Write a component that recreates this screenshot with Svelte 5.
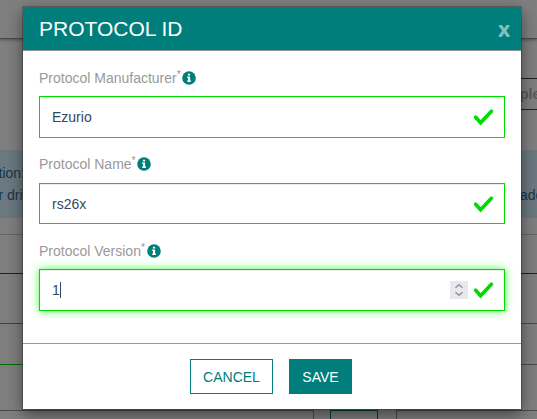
<script>
  const fields = [
    { label: 'Protocol Manufacturer', value: 'Ezurio', kind: 'first' },
    { label: 'Protocol Name', value: 'rs26x', kind: 'second' },
    { label: 'Protocol Version', value: '1', kind: 'focused' },
  ];
</script>

<div class="screen">
  <div class="page">
    <div class="topbar"></div>
    <div class="toolbar"><div class="search">ple</div></div>
    <div class="alert">
      <div class="line"><span>tion:</span></div>
      <div class="line"><span>r driv</span><span class="end">ade</span></div>
    </div>
    <div class="gap"></div>
    <div class="panel"></div>
    <div class="row dark"></div>
    <div class="row valid"><i></i><b></b></div>
    <div class="row valid tall"><i></i><b></b></div>
    <div class="bottom"><i></i><b></b><i class="rest"></i></div>
  </div>

  <div class="modal">
    <header>
      <h4>PROTOCOL ID</h4>
      <span class="close">x</span>
    </header>
    <main>
      {#each fields as f}
        <div class="field {f.kind}">
          <div class="label">
            <span>{f.label}</span><span class="star">*</span>
            <svg class="info" width="14" height="14" viewBox="0 0 14 14">
              <circle cx="7" cy="7" r="6.8" fill="#007e7b" />
              <path d="M5.9 2.8h2.2v1.8H5.9zM5.2 5.6h2.9v3.9h.8v1.4H5.2V9.5h.8V7h-.8z" fill="#fff" />
            </svg>
          </div>
          <div class="input">
            <span>{f.value}</span>
            {#if f.kind === 'focused'}
              <span class="caret"></span>
              <span class="spin">
                <svg width="18" height="18" viewBox="0 0 18 18" fill="none" stroke="#9090a0" stroke-width="1.5">
                  <path d="M5.5 6.7 9 3.7l3.5 3M5.5 11.3l3.5 3 3.5-3" />
                </svg>
              </span>
            {/if}
            <svg class="check" width="20" height="18" viewBox="0 0 20 18" fill="none" stroke="#00dc00" stroke-width="3.6">
              <path d="M1.6 9.2 6.6 14.8 17.4 3.2" stroke-linecap="round" />
            </svg>
          </div>
        </div>
      {/each}
    </main>
    <footer>
      <button>CANCEL</button>
      <button class="save">SAVE</button>
    </footer>
  </div>
</div>

<style>
  .screen {
    position: relative;
    width: 537px;
    height: 419px;
    overflow: hidden;
    font: 14px/20px "Liberation Sans", Arial, sans-serif;
    background: #7f7f7f;
  }
  .screen * { box-sizing: border-box; }
  .page { display: flex; flex-direction: column; height: 419px; }
  .topbar { height: 39px; flex: none; border-bottom: 1px solid #4b4b4b; box-shadow: 0 1px 3px rgba(0, 0, 0, .35); }
  .toolbar { height: 111px; flex: none; padding-top: 39px; display: flex; justify-content: flex-end; }
  .search {
    width: 90px;
    height: 32px;
    border: solid #222;
    border-width: 1px 0;
    padding-left: 73px;
    line-height: 31px;
    font-weight: bold;
    color: #595959;
  }
  .alert { height: 68px; flex: none; padding-top: 13px; background: #6c7980; color: #18364a; }
  .line { height: 21.5px; display: flex; justify-content: space-between; white-space: nowrap; margin-left: -1.5px; }
  .end { width: 17px; }
  .gap { height: 16px; flex: none; }
  .panel { height: 39px; flex: none; border-top: 1px solid #666; }
  .row { height: 50px; flex: none; display: flex; }
  .dark { border-top: 1px solid #222; }
  .valid { height: 41px; }
  .tall { height: 46px; }
  .valid i { flex: 1; border-top: 1px solid #006e00; }
  .valid b { width: 140px; border-top: 1px solid #4b4b4b; }
  .bottom { display: flex; height: 9px; }
  .bottom i { width: 314px; border: solid #4b4b4b; border-width: 1px 1px 0 0; }
  .bottom b { width: 48px; margin: 0 18px 0 16px; border: 1px solid #003f3d; border-bottom: 0; }
  .bottom .rest { flex: 1; border-width: 1px 0 0 1px; }

  .modal {
    position: absolute;
    left: 23px;
    top: 7px;
    width: 498px;
    height: 402px;
    display: flex;
    flex-direction: column;
    background: #fff;
    box-shadow: 0 0 0 1px rgba(0, 0, 0, .2), 0 5px 15px rgba(0, 0, 0, .5);
  }
  header {
    height: 44px;
    flex: none;
    display: flex;
    align-items: center;
    justify-content: space-between;
    padding: 0 11px 0 16px;
    background: #007e7b;
    border-bottom: 1px solid #8b9695;
    color: #fff;
  }
  h4 { margin: 0; font-size: 21px; font-weight: 400; line-height: 24px; }
  .close { font-size: 21px; font-weight: bold; line-height: 24px; color: #80bfbd; text-shadow: 0 1px 0 #80bfbd; }
  main { flex: 1; padding: 17px 16px 0; }
  .field { height: 86px; }
  .second { height: 87px; }
  .label { height: 28px; display: flex; color: #999; }
  .second .label { height: 29px; }
  .star { font-size: 10.5px; line-height: 12px; }
  .info { margin: 3px 0 0 1.5px; }
  .input {
    height: 42px;
    border: 1px solid #00dc00;
    padding: 0 10px 0 12px;
    display: flex;
    align-items: center;
    color: #34495e;
    background: #fff;
    box-shadow: inset 0 1px 1px rgba(0, 0, 0, .075);
  }
  .second .input { height: 41px; }
  .focused .input { box-shadow: inset 0 1px 1px rgba(0, 0, 0, .075), 0 0 8px #43ff43; }
  .check { margin-left: auto; }
  .caret { width: 1px; height: 16px; background: #34495e; }
  .spin { margin-left: auto; width: 18px; height: 18px; background: #e9e9ed; display: flex; }
  .spin + .check { margin-left: 6px; }
  footer {
    height: 66px;
    flex: none;
    border-top: 1px solid #999;
    padding: 15px 2px 0 0;
    display: flex;
    justify-content: center;
    gap: 16px;
  }
  button {
    width: 83px;
    height: 35px;
    padding: 0;
    font: inherit;
    color: #007e7b;
    background: #fff;
    border: 1px solid #007e7b;
    border-radius: 0;
  }
  .save { width: 63px; color: #fff; background: #007e7b; }
</style>
